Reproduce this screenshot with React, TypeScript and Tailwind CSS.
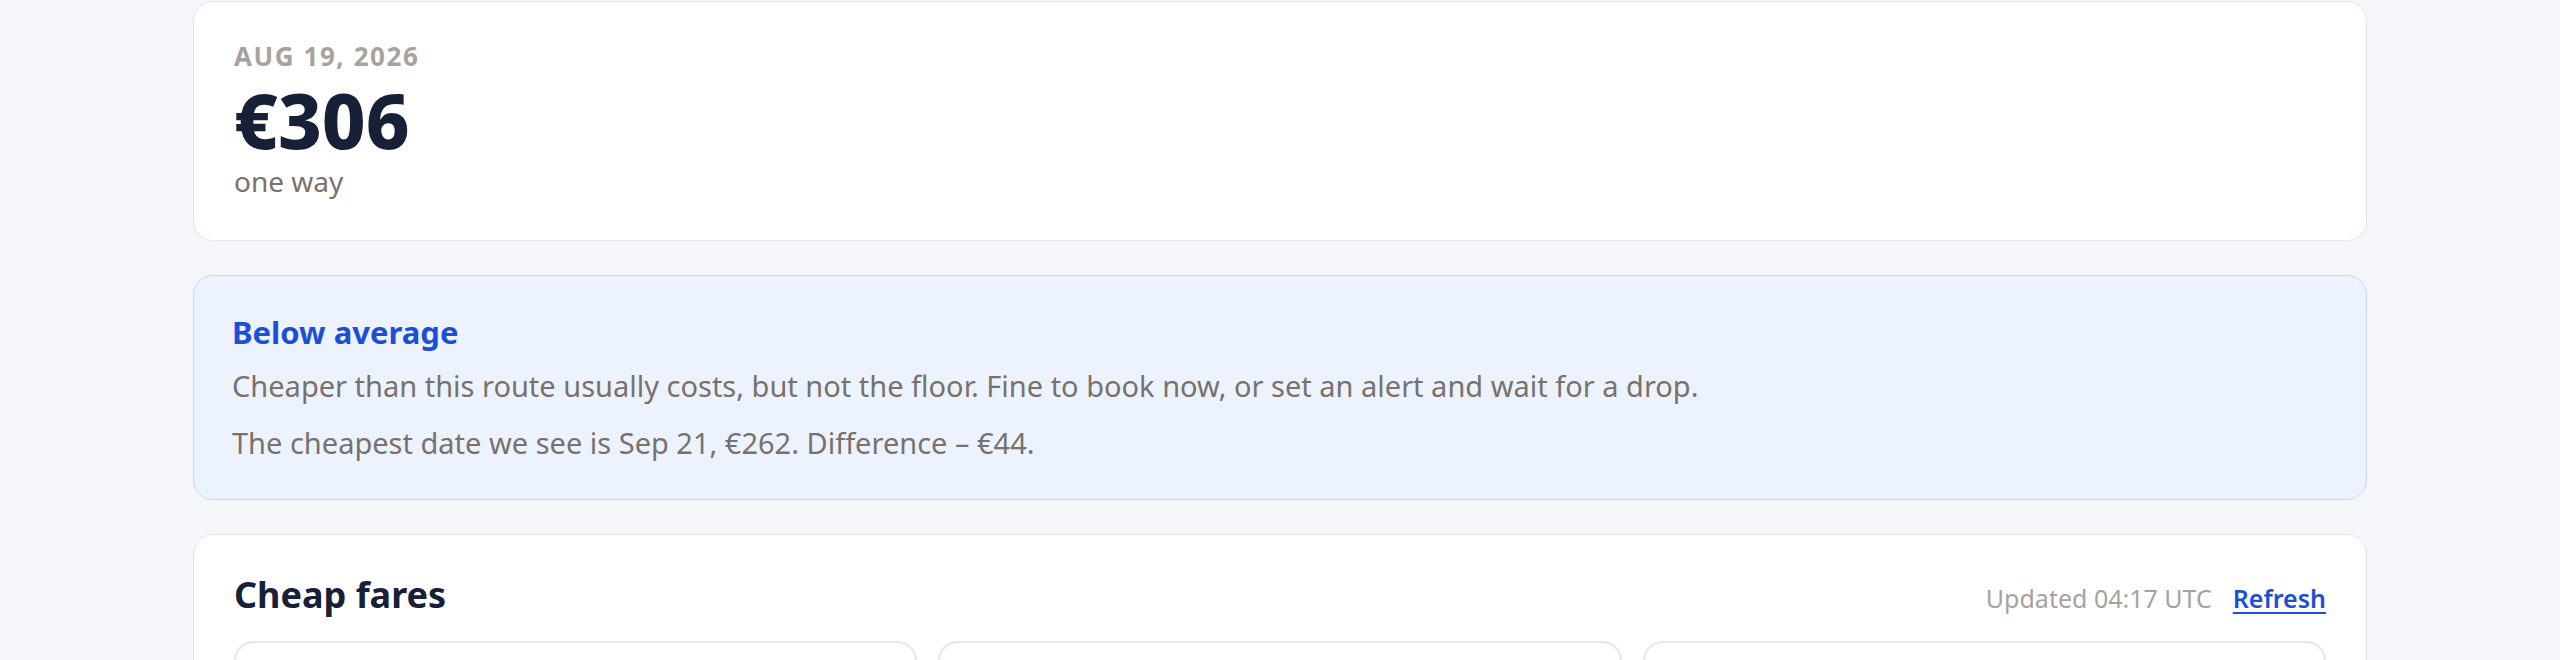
import React from "react";

export default function App() {
  return (
    <div className="min-h-[660px] bg-[#f4f6fa] font-['Noto_Sans',sans-serif] pt-px">
      <div className="w-[2174px] mx-auto flex flex-col gap-[34px]">
        <div className="bg-white border border-[#e3e5ea] rounded-[20px] px-10 pt-9 pb-[41px]">
          <div className="text-[26px] leading-[36px] font-bold tracking-[0.06em] text-[#a8a29e] uppercase">
            Aug 19, 2026
          </div>
          <div className="mt-[4px] text-[76px] leading-[84px] font-extrabold text-[#172036]">€306</div>
          <div className="mt-[1px] text-[28px] leading-[36px] text-[#78716c]">one way</div>
        </div>

        <div className="bg-[#edf3fe] border border-[#c7d6f2] rounded-[20px] px-[38px] pt-10 pb-[36px]">
          <div className="text-[31px] leading-[32px] font-bold text-[#1d4ed8]">Below average</div>
          <p className="mt-[18px] text-[29px] leading-[40px] text-[#78716c]">
            Cheaper than this route usually costs, but not the floor. Fine to book now, or set an alert and wait for a drop.
          </p>
          <p className="mt-[17px] text-[29px] leading-[40px] text-[#78716c]">
            The cheapest date we see is Sep 21, €262. Difference – €44.
          </p>
        </div>

        <div className="bg-white border border-[#e3e5ea] rounded-[20px] px-10 pt-10 pb-10">
          <div className="flex items-baseline justify-between mb-[23px]">
            <h2 className="text-[36px] leading-[40px] font-bold text-[#172036]">Cheap fares</h2>
            <div className="flex items-baseline gap-[21px]">
              <span className="text-[25px] text-[#a8a29e]">Updated 04:17 UTC</span>
              <a href="#" className="text-[25px] font-semibold text-[#1d4ed8] underline underline-offset-4">
                Refresh
              </a>
            </div>
          </div>
          <div className="grid grid-cols-3 gap-[21px]">
            <div className="h-[220px] rounded-[20px] border-2 border-[#e5e7eb] bg-white" />
            <div className="h-[220px] rounded-[20px] border-2 border-[#e5e7eb] bg-white" />
            <div className="h-[220px] rounded-[20px] border-2 border-[#e5e7eb] bg-white" />
          </div>
        </div>
      </div>
    </div>
  );
}
